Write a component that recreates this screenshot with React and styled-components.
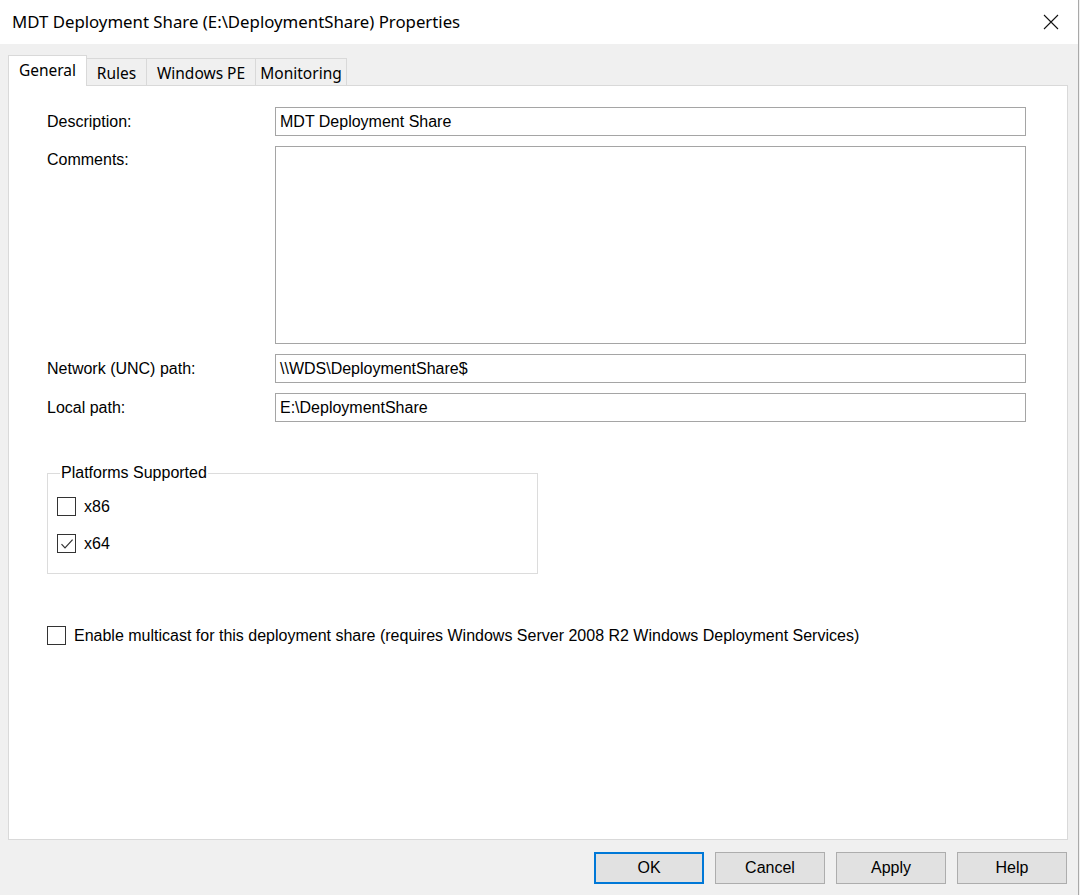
import React, { useState } from 'react'
import styled, { createGlobalStyle, css } from 'styled-components'

const GlobalStyle = createGlobalStyle`
  html, body {
    margin: 0;
    padding: 0;
    background: #f0f0f0;
  }
`

const tabs = [
  { label: 'General', width: 79 },
  { label: 'Rules', width: 60 },
  { label: 'Windows PE', width: 109 },
  { label: 'Monitoring', width: 91 }
]

const fields = [
  { label: 'Description:', value: 'MDT Deployment Share', height: 29 },
  { label: 'Comments:', value: '', height: 198, multi: true },
  { label: 'Network (UNC) path:', value: '\\\\WDS\\DeploymentShare$', height: 29 },
  { label: 'Local path:', value: 'E:\\DeploymentShare', height: 29 }
]

function CheckIcon() {
  return (
    <svg width='14' height='14' viewBox='0 0 14 14'>
      <path d='M1.5 7.2 L5 10.8 L12.6 2.6' fill='none' stroke='#333' strokeWidth='1.2' />
    </svg>
  )
}

function Check({ checked, label, onToggle }) {
  return (
    <CheckRow onClick={onToggle}>
      <Box>{checked && <CheckIcon />}</Box>
      <CheckText>{label}</CheckText>
    </CheckRow>
  )
}

export default function App() {
  const [active, setActive] = useState(0)
  const [platforms, setPlatforms] = useState({ x86: false, x64: true })
  const [multicast, setMulticast] = useState(false)

  return (
    <Window>
      <GlobalStyle />
      <TitleBar>
        <Title>MDT Deployment Share (E:\DeploymentShare) Properties</Title>
        <CloseButton>
          <svg width='16' height='16' viewBox='0 0 16 16'>
            <path d='M1 1 L15 15 M15 1 L1 15' stroke='#111' strokeWidth='1.1' />
          </svg>
        </CloseButton>
      </TitleBar>

      <Body>
        <TabStrip>
          {tabs.map((t, i) => (
            <Tab key={t.label} w={t.width} selected={active === i} onClick={() => setActive(i)}>
              {t.label}
            </Tab>
          ))}
        </TabStrip>

        <Panel>
          <FormGrid>
            {fields.map(f => (
              <React.Fragment key={f.label}>
                <Label multi={f.multi}>{f.label}</Label>
                <Field h={f.height}>{f.value}</Field>
              </React.Fragment>
            ))}
          </FormGrid>

          <GroupBox>
            <Legend>Platforms Supported</Legend>
            <Check
              checked={platforms.x86}
              label='x86'
              onToggle={() => setPlatforms({ ...platforms, x86: !platforms.x86 })}
            />
            <Check
              checked={platforms.x64}
              label='x64'
              onToggle={() => setPlatforms({ ...platforms, x64: !platforms.x64 })}
            />
          </GroupBox>

          <Multicast>
            <Check
              checked={multicast}
              label='Enable multicast for this deployment share (requires Windows Server 2008 R2 Windows Deployment Services)'
              onToggle={() => setMulticast(!multicast)}
            />
          </Multicast>
        </Panel>

        <ButtonRow>
          <Button primary>OK</Button>
          <Button>Cancel</Button>
          <Button>Apply</Button>
          <Button>Help</Button>
        </ButtonRow>
      </Body>
    </Window>
  )
}

const Window = styled.div`
  width: 1078px;
  height: 895px;
  background: #f0f0f0;
  border-right: 1px solid #a9a9a9;
  display: flex;
  flex-direction: column;
  font-family: 'Liberation Sans', Arial, sans-serif;
  color: #000;
`

const TitleBar = styled.div`
  height: 44px;
  background: #fff;
  display: flex;
  align-items: center;
  justify-content: space-between;
  padding-left: 12px;
  flex-shrink: 0;
`

const Title = styled.div`
  font-family: 'Noto Sans', sans-serif;
  font-size: 16.8px;
  color: #000;
  padding-bottom: 1px;
`

const CloseButton = styled.div`
  width: 50px;
  height: 44px;
  display: flex;
  align-items: center;
  justify-content: center;
  margin-right: 2px;
`

const Body = styled.div`
  flex: 1;
  display: flex;
  flex-direction: column;
  padding: 11px 10px 0 8px;
`

const TabStrip = styled.div`
  display: flex;
  align-items: flex-end;
  height: 30px;
  position: relative;
  z-index: 1;
`

const Tab = styled.div`
  width: ${({ w }) => w}px;
  height: 27px;
  box-sizing: border-box;
  display: flex;
  align-items: center;
  justify-content: center;
  font-family: 'Noto Sans', sans-serif;
  font-size: 15.5px;
  background: #f0f0f0;
  border: 1px solid #d9d9d9;
  border-bottom: none;
  border-left: none;
  cursor: default;
  padding-top: 1px;

  ${({ selected }) =>
    selected &&
    css`
      height: 31px;
      margin-bottom: -1px;
      background: #fff;
      border-left: 1px solid #d9d9d9;
      padding-bottom: 4px;
    `}
`

const Panel = styled.div`
  height: 755px;
  box-sizing: border-box;
  background: #fff;
  border: 1px solid #d9d9d9;
  padding: 21px 0 0 38px;
  display: flex;
  flex-direction: column;
`

const FormGrid = styled.div`
  display: grid;
  grid-template-columns: 228px 751px;
  row-gap: 10px;
`

const Label = styled.div`
  font-size: 16px;
  display: flex;
  align-items: ${({ multi }) => (multi ? 'flex-start' : 'center')};
  padding-top: ${({ multi }) => (multi ? '5px' : '0')};
`

const Field = styled.div`
  height: ${({ h }) => h}px;
  box-sizing: border-box;
  border: 1px solid #a5a5a5;
  background: #fff;
  font-size: 16px;
  padding: 4px 4px 0;
  line-height: 20px;
`

const GroupBox = styled.fieldset`
  width: 491px;
  height: 110px;
  box-sizing: border-box;
  margin: 42px 0 0;
  padding: 15px 0 0 9px;
  border: 1px solid #dcdcdc;
  display: flex;
  flex-direction: column;
  gap: 18px;
`

const Legend = styled.legend`
  font-size: 16px;
  padding: 0 1px;
  margin-left: 3px;
`

const CheckRow = styled.label`
  display: flex;
  align-items: center;
  gap: 8px;
  font-size: 16px;
  cursor: default;
`

const Box = styled.span`
  width: 19px;
  height: 19px;
  box-sizing: border-box;
  border: 1px solid #333;
  background: #fff;
  display: flex;
  align-items: center;
  justify-content: center;
  flex-shrink: 0;
`

const CheckText = styled.span`
  line-height: 19px;
`

const Multicast = styled.div`
  margin-top: 52px;
`

const ButtonRow = styled.div`
  display: flex;
  justify-content: flex-end;
  gap: 11px;
  padding-top: 12px;
  padding-right: 1px;
`

const Button = styled.button`
  width: 110px;
  height: 32px;
  box-sizing: border-box;
  background: #e1e1e1;
  border: 1px solid #adadad;
  font-family: 'Liberation Sans', Arial, sans-serif;
  font-size: 16px;
  color: #000;
  padding: 0;

  ${({ primary }) =>
    primary &&
    css`
      border: 2px solid #0078d7;
    `}
`
